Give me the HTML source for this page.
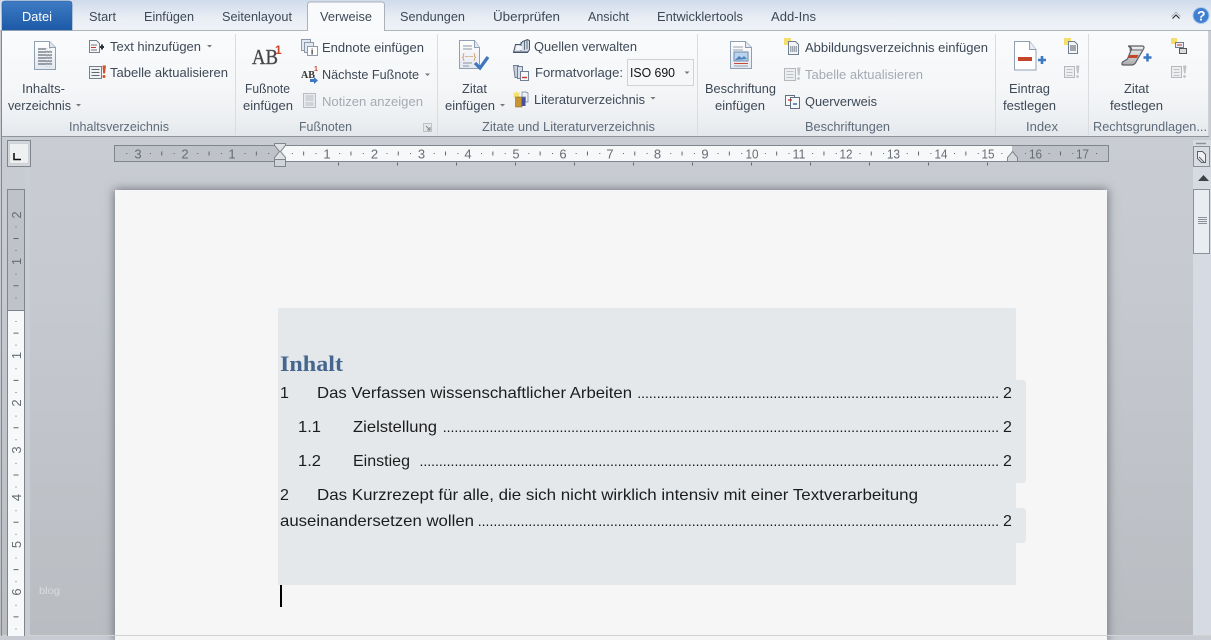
<!DOCTYPE html>
<html><head><meta charset="utf-8"><style>
html,body{margin:0;padding:0;width:1211px;height:636px;overflow:hidden;background:#c8ccd2}
.a{position:absolute}
svg{position:absolute;left:0;top:0}
text{font-family:"Liberation Sans",sans-serif;font-size:12.5px;fill:#3e4957}
.g{fill:#5e6b7a}.d{fill:#a5abb3}.k{fill:#111}
.r{font-size:13px;fill:#666c75}
.t{font-size:16px;fill:#1c1c1c}
.l{font-size:14px;fill:#111;text-anchor:end}
</style></head><body>
<div class="a" style="left:0;top:0;width:1211px;height:31px;background:linear-gradient(#cfdbeb,#e9eef5 60%,#eef2f7)"></div>
<div class="a" style="left:0;top:137px;width:1211px;height:499px;background:linear-gradient(#c9cdd3,#c6cad0 30%,#b9bcc1)"></div>
<div class="a" style="left:2px;top:31px;width:1207px;height:105px;background:linear-gradient(#fafbfc,#f5f6f8 55%,#ebeef1 88%,#e4e7eb);border-bottom:1px solid #8f949b"></div>
<div class="a" style="left:25px;top:168px;width:5px;height:468px;background:#c9ced5"></div>
<div class="a" style="left:1193px;top:140px;width:18px;height:496px;background:#d6dbe3"></div>
<div class="a" style="left:115px;top:190px;width:992px;height:450px;background:#f6f6f6;box-shadow:0 0 9px 1px #74787e"></div>
<div class="a" style="left:278px;top:308px;width:738px;height:277px;background:#e5e8eb;border-radius:2px"></div>
<div class="a" style="left:1014px;top:380px;width:12px;height:103px;background:#e5e8eb;border-radius:0 3px 3px 0"></div>
<div class="a" style="left:1014px;top:508px;width:12px;height:35px;background:#e5e8eb;border-radius:0 3px 3px 0"></div>
<div class="a" style="left:1016px;top:483px;width:5px;height:25px;background:#f6f6f6"></div>
<div class="a" style="left:0;top:635px;width:1211px;height:1px;background:#d2d2d2"></div>

<svg width="1211" height="636" viewBox="0 0 1211 636">
<defs>
<linearGradient id="bl" x1="0" y1="0" x2="0" y2="1"><stop offset="0" stop-color="#3f7cc4"/><stop offset="1" stop-color="#1c5aa8"/></linearGradient>
<linearGradient id="pg" x1="0" y1="0" x2="0" y2="1"><stop offset="0" stop-color="#fff"/><stop offset="1" stop-color="#e3e8f0"/></linearGradient>
<linearGradient id="sc" x1="0" y1="0" x2="0" y2="1"><stop offset="0" stop-color="#f2f2f2"/><stop offset="1" stop-color="#a9abae"/></linearGradient>
</defs>
<!-- frame -->
<path d="M1.5 31V636" stroke="#7e8894" stroke-width="1" fill="none"/>
<path d="M0 30.5H308M385 30.5H1211" stroke="#aeb3ba"/>
<!-- tabs -->
<path d="M2 30V4q0-3 3-3h64q3 0 3 3v26z" fill="url(#bl)" stroke="#2a5f9f" stroke-width=".6"/>
<path d="M307.5 31V5q0-3 3-3h71q3 0 3 3v26" fill="#f9fafb" stroke="#aab1bb"/>
<text x="22" y="21" textLength="30" lengthAdjust="spacingAndGlyphs" style="fill:#fff">Datei</text>
<text x="89" y="21" textLength="27" lengthAdjust="spacingAndGlyphs">Start</text>
<text x="144" y="21" textLength="50" lengthAdjust="spacingAndGlyphs">Einfügen</text>
<text x="222" y="21" textLength="70" lengthAdjust="spacingAndGlyphs">Seitenlayout</text>
<text x="320" y="21" textLength="52" lengthAdjust="spacingAndGlyphs">Verweise</text>
<text x="400" y="21" textLength="65" lengthAdjust="spacingAndGlyphs">Sendungen</text>
<text x="493" y="21" textLength="67" lengthAdjust="spacingAndGlyphs">Überprüfen</text>
<text x="588" y="21" textLength="41" lengthAdjust="spacingAndGlyphs">Ansicht</text>
<text x="657" y="21" textLength="86" lengthAdjust="spacingAndGlyphs">Entwicklertools</text>
<text x="771" y="21" textLength="45" lengthAdjust="spacingAndGlyphs">Add-Ins</text>
<!-- collapse + help -->
<path d="M1172.500 18.500l3.500-3.500 3.500 3.500" fill="none" stroke="#333" stroke-width="1.200"/><path d="M1171.500 16.500l4.500-4.500 4.500 4.500" fill="none" stroke="#999" stroke-width=".6"/>
<circle cx="1201" cy="15.500" r="8" fill="#3f7fd0" stroke="#a9c6ec"/>
<text x="1197" y="20.500" style="font-size:14px;font-weight:bold;fill:#fff">?</text>
<!-- separators -->
<path d="M235.500 34V135M437.500 34V135M697.500 34V135M995.500 34V135M1088.500 34V135" stroke="#d9dce0"/>
<path d="M1208.500 31V136" stroke="#cfd3d8"/>
<!-- ribbon text -->
<text x="110" y="51" textLength="91" lengthAdjust="spacingAndGlyphs">Text hinzufügen</text>
<text x="110" y="77" textLength="118" lengthAdjust="spacingAndGlyphs">Tabelle aktualisieren</text>
<text x="22" y="93" textLength="43" lengthAdjust="spacingAndGlyphs">Inhalts-</text>
<text x="8" y="110" textLength="63" lengthAdjust="spacingAndGlyphs">verzeichnis</text>
<text class="g" x="69" y="131" textLength="100" lengthAdjust="spacingAndGlyphs">Inhaltsverzeichnis</text>
<text x="245" y="93" textLength="45" lengthAdjust="spacingAndGlyphs">Fußnote</text>
<text x="243" y="110" textLength="50" lengthAdjust="spacingAndGlyphs">einfügen</text>
<text x="322" y="52" textLength="102" lengthAdjust="spacingAndGlyphs">Endnote einfügen</text>
<text x="322" y="79" textLength="97" lengthAdjust="spacingAndGlyphs">Nächste Fußnote</text>
<text class="d" x="322" y="106" textLength="101" lengthAdjust="spacingAndGlyphs">Notizen anzeigen</text>
<text class="g" x="299" y="131" textLength="53" lengthAdjust="spacingAndGlyphs">Fußnoten</text>
<text x="462" y="93" textLength="25" lengthAdjust="spacingAndGlyphs">Zitat</text>
<text x="445" y="110" textLength="50" lengthAdjust="spacingAndGlyphs">einfügen</text>
<text x="534" y="51" textLength="103" lengthAdjust="spacingAndGlyphs">Quellen verwalten</text>
<text x="535" y="77" textLength="88" lengthAdjust="spacingAndGlyphs">Formatvorlage:</text>
<rect x="627.500" y="59.500" width="66" height="26" fill="#f6f7f9" stroke="#cfd2d6"/>
<text class="k" x="630" y="77" textLength="45" lengthAdjust="spacingAndGlyphs">ISO 690</text>
<text x="534" y="104" textLength="111" lengthAdjust="spacingAndGlyphs">Literaturverzeichnis</text>
<text class="g" x="482" y="131" textLength="173" lengthAdjust="spacingAndGlyphs">Zitate und Literaturverzeichnis</text>
<text x="705" y="93" textLength="71" lengthAdjust="spacingAndGlyphs">Beschriftung</text>
<text x="715" y="110" textLength="50" lengthAdjust="spacingAndGlyphs">einfügen</text>
<text x="805" y="52" textLength="183" lengthAdjust="spacingAndGlyphs">Abbildungsverzeichnis einfügen</text>
<text class="d" x="805" y="79" textLength="118" lengthAdjust="spacingAndGlyphs">Tabelle aktualisieren</text>
<text x="805" y="106" textLength="72" lengthAdjust="spacingAndGlyphs">Querverweis</text>
<text class="g" x="805" y="131" textLength="85" lengthAdjust="spacingAndGlyphs">Beschriftungen</text>
<text x="1009" y="93" textLength="41" lengthAdjust="spacingAndGlyphs">Eintrag</text>
<text x="1003" y="110" textLength="53" lengthAdjust="spacingAndGlyphs">festlegen</text>
<text class="g" x="1026" y="131" textLength="32" lengthAdjust="spacingAndGlyphs">Index</text>
<text x="1124" y="93" textLength="25" lengthAdjust="spacingAndGlyphs">Zitat</text>
<text x="1110" y="110" textLength="53" lengthAdjust="spacingAndGlyphs">festlegen</text>
<text class="g" x="1093" y="131" textLength="114" lengthAdjust="spacingAndGlyphs">Rechtsgrundlagen...</text>
<!-- carets -->
<path d="M76 104h5l-2.500 2.500zM207 45h5l-2.500 2.500zM425 73.500h5l-2.500 2.500zM500 104h5l-2.500 2.500zM650.500 97h5l-2.500 2.500zM684.500 71.500h5l-2.500 2.500z" fill="#777"/>
<!-- dialog launcher -->
<path d="M423.500 123.500h8v8h-8z" fill="#e4e7ea" stroke="#b0b4b9" stroke-width=".7"/><path d="M426 126l4 4m0-3v3h-3" stroke="#888" fill="none"/>

<!-- big icon: Inhaltsverzeichnis -->
<path d="M34.500 41.500h15l6 6v22h-21z" fill="url(#pg)" stroke="#8fa0b5"/><path d="M49.500 41.500v6h6" fill="#dfe5ee" stroke="#8fa0b5"/>
<path d="M38 49h8M38 52h14M38 55h14M38 58h14M38 61h14M38 64h14" stroke="#666d77" stroke-width="1.300"/>
<path d="M47 48v19M50 48v19" stroke="#b8c6da" stroke-width="1" stroke-dasharray="1 1"/>
<!-- Text hinzufügen -->
<path d="M89.500 40.500h7l3 3v9h-10z" fill="#f5f7fa" stroke="#75808d"/><path d="M91 45h6M91 50h6" stroke="#777"/><path d="M91 47.500h5" stroke="#c33"/><path d="M100 47h4m-2-2.500v5" stroke="#2c3440" stroke-width="2"/>
<!-- Tabelle aktualisieren -->
<path d="M89.500 66.500h12v12h-12z" fill="#eef1f5" stroke="#75808d"/><path d="M91.500 69.500h8M91.500 72.500h8M91.500 75.500h8" stroke="#666"/><path d="M102.500 65.500h3.500l-1 8h-1.800z" fill="#d2502a"/><circle cx="104" cy="76.500" r="1.500" fill="#d2502a"/>
<!-- AB1 -->
<text x="252" y="64" style="font-family:'Liberation Serif',serif;font-size:21px;fill:#444;stroke:#555;stroke-width:.4" textLength="26" lengthAdjust="spacingAndGlyphs">AB</text>
<text x="275" y="54" style="font-family:'Liberation Sans';font-size:12px;font-weight:bold;fill:#c8452c">1</text>
<!-- Endnote -->
<rect x="301.500" y="39.500" width="9" height="11" fill="#e3e9f2" stroke="#8d99a8"/><rect x="304.500" y="42.500" width="9" height="10" fill="#e3e9f2" stroke="#8d99a8"/><rect x="307.500" y="46.500" width="10" height="9" fill="#fff" stroke="#8d99a8"/>
<text x="311" y="54.500" style="font-size:8px;font-weight:bold;fill:#222">i</text>
<!-- Nächste Fußnote -->
<text x="301" y="78" style="font-size:10px;font-family:'Liberation Serif';font-weight:bold;fill:#333">AB</text>
<text x="314" y="71" style="font-size:7px;font-weight:bold;fill:#c8452c">1</text>
<path d="M310 79h4v-2l4 3.500-4 3.500v-2h-4z" fill="#3f79c5"/>
<!-- Notizen (disabled) -->
<rect x="303.500" y="93.500" width="12" height="14" fill="#e8eaed" stroke="#b9bdc3"/><path d="M305.500 96h8M305.500 98h8M305.500 100h8M305.500 103h8M305.500 105h8" stroke="#b9bdc3"/>
<!-- Zitat einfügen -->
<path d="M459.500 40.500h15l5 7v21h-20z" fill="url(#pg)" stroke="#8fa0b5"/><path d="M474.500 40.500v7h5" fill="#e3e8f0" stroke="#8fa0b5"/>
<path d="M463 46h9M463 49h9M463 63h9M463 66h6" stroke="#8b95a3"/>
<text x="462" y="59" style="font-size:7px;fill:#c07a2a" textLength="14" lengthAdjust="spacingAndGlyphs">{~~}</text>
<path d="M475 63l5 5 8-11" fill="none" stroke="#3f76bd" stroke-width="3.200"/>
<!-- Quellen -->
<path d="M513.500 52.500l2-8h5l2-3 5-2 2 1v9l-2 3z" fill="#d3dbe6" stroke="#46556a"/><path d="M521 42v9M524.500 41v9M527 40v9" stroke="#46556a" stroke-width=".8"/><path d="M514 52h14" stroke="#46556a"/><path d="M516 46h6v4h-6z" fill="#f2f4f7"/>
<!-- Formatvorlage -->
<path d="M513.500 65.500h5l.5 12h-4z" fill="#c7d0dd" stroke="#6f7e90"/><path d="M517.500 66.500h5v12h-5z" fill="#d7deea" stroke="#6f7e90"/><rect x="520.500" y="71.500" width="8" height="9" fill="#f7f8fa" stroke="#6f7e90"/><path d="M522 77.500h5" stroke="#c33" stroke-width="1.400"/>
<!-- Literaturverzeichnis -->
<path d="M516.500 91l1 2 2.500-.5-1 2.500 1 2.500-2.500-.5-1 2-1-2-2.500.5 1-2.500-1-2.500 2.500.5z" fill="#f2e070"/><rect x="515.500" y="97" width="6.500" height="10" fill="#c9972f" stroke="#7a5c1e" stroke-width=".5"/><rect x="521.500" y="97" width="4" height="9" fill="#4a4f9c"/><path d="M522 92h4l2 1v9h-2.500v-5h-3.500z" fill="#eef1f5" stroke="#6f7e90" stroke-width=".7"/>
<!-- Beschriftung -->
<path d="M730.500 41.500h15l6 6v21h-21z" fill="url(#pg)" stroke="#8fa0b5"/><path d="M745.500 41.500v6h6" fill="#e3e8f0" stroke="#8fa0b5"/>
<path d="M733 47h10M733 50h10" stroke="#9aa3ae"/><rect x="734" y="52" width="14" height="9" fill="#b9d4ee" stroke="#6f8aa8"/><path d="M735 60l4-4 3 2 2-2 3 3z" fill="#4f82b8"/><path d="M734 63.500h14" stroke="#c7473b"/><path d="M734 66h14" stroke="#9aa3ae"/>
<!-- Abbildung -->
<rect x="784" y="38" width="7" height="7" fill="#f3df6e"/><path d="M788.500 41.500h7l3 3v10h-10z" fill="#f3f5f8" stroke="#6f7e90"/><path d="M790 47h7M790 49h7M790 51h7" stroke="#4f5966" stroke-dasharray="1.500 .5"/>
<!-- Tabelle disabled -->
<path d="M784.500 68.500h11v12h-11z" fill="#eceef0" stroke="#b4b8bd"/><path d="M786.500 71.500h7M786.500 74.500h7M786.500 77.500h7" stroke="#bfc2c6"/><path d="M797 67.500h3.500l-1 8h-1.500z" fill="#bfc2c6"/><circle cx="798.500" cy="78.500" r="1.400" fill="#bfc2c6"/>
<!-- Querverweis -->
<rect x="785.500" y="95.500" width="9" height="10" fill="#f7f8fa" stroke="#5f6e80"/><rect x="790.500" y="97.500" width="9" height="11" fill="#f7f8fa" stroke="#5f6e80"/><path d="M788 100h4" stroke="#c33" stroke-width="1.300"/><path d="M793 104h4" stroke="#2f6cb8" stroke-width="1.500"/>
<!-- Eintrag -->
<path d="M1014.500 41.500h15l6.500 8v20.500h-21.500z" fill="#fff" stroke="#8fa0b5"/><path d="M1029.500 41.500v8h6.500" fill="#e9edf3" stroke="#8fa0b5"/>
<rect x="1018" y="57" width="14" height="4" fill="#c4452a"/>
<path d="M1038 60h8m-4-4v8" stroke="#3d78c4" stroke-width="2.600"/>
<!-- index small -->
<rect x="1064" y="38" width="7" height="7" fill="#f3df6e"/><path d="M1068.500 41.500h6l3 3v9h-9z" fill="#f3f5f8" stroke="#6f7e90"/><path d="M1070 46h6M1070 48h6M1070 50h6" stroke="#4f5966"/>
<path d="M1064.500 66.500h10v11h-10z" fill="#eceef0" stroke="#b4b8bd"/><path d="M1066.500 69.500h6M1066.500 72.500h6M1066.500 75.500h6" stroke="#bfc2c6"/><path d="M1076 65.500h3.500l-1 8h-1.500z" fill="#bfc2c6"/><circle cx="1077.500" cy="76.500" r="1.400" fill="#bfc2c6"/>
<!-- Zitat festlegen scroll -->
<path d="M1128 46h14q3 0 1.500 3l-7 12q-1.500 4-5 4h-8q-2.500 0-1-3l5-3 4-10q-1-3-3.500-3z" fill="url(#sc)" stroke="#5c5f64" stroke-width="1.200"/>
<path d="M1128 46q3 2 2 4h12" fill="none" stroke="#5c5f64" stroke-width=".9"/>
<path d="M1128 58l1-3h9.500l-1.500 3z" fill="#c4452a"/>
<path d="M1143.500 57.500h8m-4-4v8" stroke="#3d78c4" stroke-width="2.600"/>
<!-- rechts small -->
<rect x="1171" y="38" width="6" height="6" fill="#f3df6e"/><path d="M1175.500 42.500h8v5h-8z" fill="#e8ebef" stroke="#6f7e90"/><path d="M1177 45h5" stroke="#c33"/><path d="M1179.500 48.500h7v5h-7z" fill="#d9dbde" stroke="#555"/>
<path d="M1171.500 66.500h10v11h-10z" fill="#eceef0" stroke="#b4b8bd"/><path d="M1173.500 69.500h6M1173.500 72.500h6M1173.500 75.500h6" stroke="#bfc2c6"/><path d="M1183 65.500h3.500l-1 8h-1.500z" fill="#bfc2c6"/><circle cx="1184.500" cy="76.500" r="1.400" fill="#bfc2c6"/>

<!-- tab selector -->
<rect x="7.500" y="140.500" width="23" height="26" fill="#d3d6da" stroke="#7f858c"/><rect x="9.500" y="143.500" width="19" height="20" fill="#eff0f2" stroke="#cdd0d5"/>
<path d="M14 153v6.500h7" fill="none" stroke="#111" stroke-width="1.600"/>
<!-- horizontal ruler -->
<rect x="114.500" y="145.500" width="994" height="16" fill="#bfc3c9" stroke="#7f858c"/>
<rect x="280" y="146" width="732" height="15" fill="#f7f8f9"/>
<path d="M126.300 153.500H1105" stroke="#666" stroke-dasharray="1 22.650"/>
<path d="M161.250 153.500H1105" stroke="#666" stroke-width="4" stroke-dasharray="1 46.300"/>
<g text-anchor="middle">
<text class="r" x="138" y="158.500">3</text><text class="r" x="185" y="158.500">2</text><text class="r" x="232" y="158.500">1</text>
<text class="r" x="327" y="158.500">1</text><text class="r" x="374.500" y="158.500">2</text><text class="r" x="421.500" y="158.500">3</text><text class="r" x="468" y="158.500">4</text><text class="r" x="516" y="158.500">5</text><text class="r" x="563" y="158.500">6</text><text class="r" x="610" y="158.500">7</text><text class="r" x="657.500" y="158.500">8</text><text class="r" x="705" y="158.500">9</text><text class="r" x="752" y="158.500" textLength="13" lengthAdjust="spacingAndGlyphs">10</text><text class="r" x="799" y="158.500" textLength="13" lengthAdjust="spacingAndGlyphs">11</text><text class="r" x="846" y="158.500" textLength="13" lengthAdjust="spacingAndGlyphs">12</text><text class="r" x="893.500" y="158.500" textLength="13" lengthAdjust="spacingAndGlyphs">13</text><text class="r" x="941" y="158.500" textLength="13" lengthAdjust="spacingAndGlyphs">14</text><text class="r" x="988" y="158.500" textLength="13" lengthAdjust="spacingAndGlyphs">15</text><text class="r" x="1035.500" y="158.500" textLength="13" lengthAdjust="spacingAndGlyphs">16</text><text class="r" x="1082.500" y="158.500" textLength="13" lengthAdjust="spacingAndGlyphs">17</text>
</g>
<!-- indents -->
<path d="M274.500 143.500h11v2l-5 6 5 6v2h-11v-2l5-6-5-6z" fill="#dfe1e4" stroke="#7f858c"/>
<rect x="274.500" y="159.500" width="11" height="7" fill="#d0d3d7" stroke="#7f858c"/>
<path d="M1007.500 161.500v-4l5-6 5 6v4z" fill="#d5d7da" stroke="#7f858c"/>
<!-- tab ticks -->
<path d="M338 164H1000" stroke="#666" stroke-width="3" stroke-dasharray="1 58"/>
<!-- vertical ruler -->
<rect x="7.500" y="189.500" width="17" height="450" fill="#f7f8f9" stroke="#7f858c"/>
<rect x="8" y="190" width="16" height="120" fill="#bfc3c9"/><path d="M8 310.500h16" stroke="#7f858c"/>
<path d="M16 226.400V636" stroke="#666" stroke-dasharray="1 22.650"/>
<path d="M16 238V636" stroke="#666" stroke-width="5" stroke-dasharray="1 46.300"/>
<g text-anchor="middle">
<text class="r" transform="translate(21 215) rotate(-90)">2</text>
<text class="r" transform="translate(21 261.500) rotate(-90)">1</text>
<text class="r" transform="translate(21 355.500) rotate(-90)">1</text>
<text class="r" transform="translate(21 403) rotate(-90)">2</text>
<text class="r" transform="translate(21 450) rotate(-90)">3</text>
<text class="r" transform="translate(21 497.500) rotate(-90)">4</text>
<text class="r" transform="translate(21 544.500) rotate(-90)">5</text>
<text class="r" transform="translate(21 592) rotate(-90)">6</text>
</g>
<text x="39" y="594" style="font-size:10px;fill:#d8dbdf" textLength="21" lengthAdjust="spacingAndGlyphs">blog</text>
<!-- scrollbar -->
<path d="M1196 143.500h10" stroke="#8a8f96" stroke-width="1.400"/>
<rect x="1193.500" y="146.500" width="16" height="20" fill="#d9dde3" stroke="#8a9099"/>
<path d="M1197.500 151.500h5l3 3v8h-4l-4-4z" fill="#eef0f3" stroke="#5a6068"/><path d="M1199 157l5 5" stroke="#5a6068"/>
<path d="M1198 181l5.500-6 5.500 6z" fill="#3d4046"/>
<rect x="1193.500" y="189.500" width="16" height="64" fill="#e9ecf0" stroke="#8a9099"/>
<path d="M1198 217.500h9M1198 219.500h9M1198 221.500h9M1198 223.500h9" stroke="#8a9099"/>
<!-- document -->
<text x="280" y="371" style="font-family:'Liberation Serif',serif;font-weight:bold;font-size:22px;fill:#44668f" textLength="63" lengthAdjust="spacingAndGlyphs">Inhalt</text>
<text class="t" x="280" y="398">1</text>
<text class="t" x="317" y="398" textLength="315" lengthAdjust="spacingAndGlyphs">Das Verfassen wissenschaftlicher Arbeiten</text>
<text class="l" x="999" y="398">.............................................................................................</text>
<text class="t" x="1003" y="398">2</text>
<text class="t" x="298" y="432" textLength="23" lengthAdjust="spacingAndGlyphs">1.1</text>
<text class="t" x="353" y="432" textLength="84" lengthAdjust="spacingAndGlyphs">Zielstellung</text>
<text class="l" x="999" y="432">...............................................................................................................................................</text>
<text class="t" x="1003" y="432">2</text>
<text class="t" x="298" y="466" textLength="23" lengthAdjust="spacingAndGlyphs">1.2</text>
<text class="t" x="353" y="466" textLength="57" lengthAdjust="spacingAndGlyphs">Einstieg</text>
<text class="l" x="999" y="466">.....................................................................................................................................................</text>
<text class="t" x="1003" y="466">2</text>
<text class="t" x="280" y="500">2</text>
<text class="t" x="317" y="500" textLength="601" lengthAdjust="spacingAndGlyphs">Das Kurzrezept für alle, die sich nicht wirklich intensiv mit einer Textverarbeitung</text>
<text class="t" x="280" y="526" textLength="194" lengthAdjust="spacingAndGlyphs">auseinandersetzen wollen</text>
<text class="l" x="999" y="526">......................................................................................................................................</text>
<text class="t" x="1003" y="526">2</text>
<rect x="280" y="585" width="2" height="22" fill="#000"/>
</svg>
</body></html>
